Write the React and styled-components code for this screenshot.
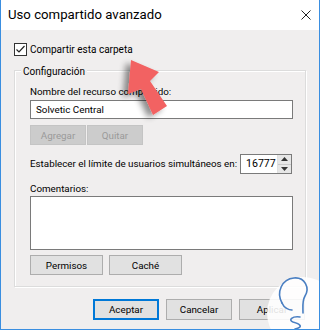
import React from "react";
import styled, { createGlobalStyle } from "styled-components";

const Global = createGlobalStyle`
  html, body { margin: 0; padding: 0; background: #fff; }
  * { box-sizing: border-box; }
`;

const Window = styled.div`
  position: relative;
  width: 320px;
  height: 330px;
  overflow: hidden;
  display: flex;
  flex-direction: column;
  background: #f0eeee;
  border: 1px solid #3a8ee0;
  border-top: none;
  font-family: Roboto, "Liberation Sans", sans-serif;
  font-size: 9.8px;
  color: #000;
`;

const TitleBar = styled.div`
  height: 30px;
  flex: none;
  background: #fff;
  display: flex;
  align-items: center;
  justify-content: space-between;
  padding: 0 8px 1px 7px;
`;

const Title = styled.span`
  font-size: 13.2px;
  line-height: 16px;
`;

const Body = styled.div`
  flex: 1;
  display: flex;
  flex-direction: column;
  padding: 13px 13px 0 13px;
`;

const CheckRow = styled.label`
  display: flex;
  align-items: center;
  gap: 3px;
  height: 13px;
  line-height: 15px;
  white-space: nowrap;
  font-size: 10px;
`;

const CheckBox = styled.span`
  width: 13px;
  height: 13px;
  border: 1px solid #333;
  background: #fff;
  display: flex;
  align-items: center;
  justify-content: center;
`;

const GroupBox = styled.div`
  margin-top: 14px;
  border: 1px solid #dcdcdc;
  box-shadow: inset 1px 1px 0 #fff, 1px 1px 0 #fff;
  padding: 0 12px 11px 15px;
  display: flex;
  flex-direction: column;
`;

const Legend = styled.span`
  align-self: flex-start;
  margin: -7px 0 0 -9px;
  padding: 0 2px;
  background: #f0eeee;
  line-height: 15px;
  font-size: 10px;
`;

const Label = styled.div`
  white-space: nowrap;
  line-height: ${(p) => p.$lh || 15}px;
  margin-top: ${(p) => p.$mt || 0}px;
  margin-bottom: ${(p) => p.$mb || 0}px;
`;

const TextBox = styled.div`
  height: ${(p) => p.$h || 19}px;
  margin-top: ${(p) => p.$mt || 0}px;
  background: #fff;
  border: 1px solid #7a7a7a;
  padding: 1px 5px;
  line-height: 15px;
`;

const ButtonRow = styled.div`
  display: flex;
  gap: ${(p) => p.$gap || 0}px;
  margin-top: ${(p) => p.$mt || 0}px;
  justify-content: ${(p) => p.$justify || "flex-start"};
  padding-right: ${(p) => p.$pr || 0}px;
`;

const Button = styled.div`
  width: ${(p) => p.$w}px;
  height: ${(p) => p.$h || 20}px;
  display: flex;
  align-items: center;
  justify-content: center;
  background: ${(p) => (p.$disabled ? "#cccccc" : "#e1e1e1")};
  border: 1px solid ${(p) => (p.$disabled ? "#c4c4c4" : p.$default ? "#0078d7" : "#adadad")};
  box-shadow: ${(p) => (p.$default ? "inset 0 0 0 1px #0078d7" : "none")};
  color: ${(p) => (p.$disabled ? "#9a9a9a" : "#000")};
  line-height: 15px;
`;

const LimitRow = styled.div`
  display: flex;
  align-items: center;
  justify-content: space-between;
  margin-top: 9px;
`;

const Spinner = styled.div`
  flex: none;
  width: 52px;
  height: 20px;
  display: flex;
  border: 1px solid #7a7a7a;
  background: #fff;
  margin-right: 1px;
`;

const SpinValue = styled.div`
  flex: 1;
  white-space: nowrap;
  padding: 1px 0 0 5px;
  line-height: 16px;
  font-size: 10.6px;
`;

const SpinButtons = styled.div`
  width: 14px;
  display: flex;
  flex-direction: column;
  border-left: 1px solid #e0e0e0;
`;

const SpinBtn = styled.div`
  flex: 1;
  background: #e6e6e6;
  display: flex;
  align-items: center;
  justify-content: center;
  border-bottom: ${(p) => (p.$top ? "1px solid #c8c8c8" : "none")};
`;

const Overlay = styled.svg`
  position: absolute;
  left: -1px;
  top: 0;
  pointer-events: none;
`;

export default function App() {
  return (
    <>
      <Global />
      <Window>
        <TitleBar>
          <Title>Uso compartido avanzado</Title>
          <svg width="10" height="10" viewBox="0 0 10 10">
            <path d="M0.5 0.5 L9.5 9.5 M9.5 0.5 L0.5 9.5" stroke="#222" strokeWidth="1" />
          </svg>
        </TitleBar>
        <Body>
          <CheckRow>
            <CheckBox>
              <svg width="11" height="11" viewBox="0 0 11 11">
                <path d="M1.5 5.5 L4 8 L9.5 2" stroke="#222" strokeWidth="1.2" fill="none" />
              </svg>
            </CheckBox>
            Compartir esta carpeta
          </CheckRow>
          <GroupBox>
            <Legend>Configuración</Legend>
            <Label $mt={5}>Nombre del recurso compartido:</Label>
            <TextBox $mt={1}>Solvetic Central</TextBox>
            <ButtonRow $mt={6} $gap={1}>
              <Button $w={56} $disabled>Agregar</Button>
              <Button $w={56} $disabled>Quitar</Button>
            </ButtonRow>
            <LimitRow>
              <Label $mb={2}>Establecer el límite de usuarios simultáneos en:</Label>
              <Spinner>
                <SpinValue>16777</SpinValue>
                <SpinButtons>
                  <SpinBtn $top>
                    <svg width="7" height="4" viewBox="0 0 7 4"><path d="M0 4 L3.5 0 L7 4 Z" fill="#333" /></svg>
                  </SpinBtn>
                  <SpinBtn>
                    <svg width="7" height="4" viewBox="0 0 7 4"><path d="M0 0 L3.5 4 L7 0 Z" fill="#333" /></svg>
                  </SpinBtn>
                </SpinButtons>
              </Spinner>
            </LimitRow>
            <Label $mt={8} $lh={14}>Comentarios:</Label>
            <TextBox $h={54} />
            <ButtonRow $mt={5} $gap={6}>
              <Button $w={73}>Permisos</Button>
              <Button $w={73}>Caché</Button>
            </ButtonRow>
          </GroupBox>
          <ButtonRow $mt={12} $gap={7} $justify="flex-end" $pr={1}>
            <Button $w={66} $h={21} $default>Aceptar</Button>
            <Button $w={66} $h={21}>Cancelar</Button>
            <Button $w={66} $h={21}>Aplicar</Button>
          </ButtonRow>
        </Body>
        <Overlay width="320" height="330" viewBox="0 0 320 330">
          <defs>
            <filter id="sh" x="-50%" y="-50%" width="200%" height="200%">
              <feGaussianBlur in="SourceAlpha" stdDeviation="3" />
              <feOffset dx="-5" dy="3" result="b" />
              <feComponentTransfer>
                <feFuncA type="linear" slope="0.45" />
              </feComponentTransfer>
              <feMerge>
                <feMergeNode />
                <feMergeNode in="SourceGraphic" />
              </feMerge>
            </filter>
          </defs>
          <polygon
            points="131,60 159,72 150,81 167,106 153,115 141,89 128,94"
            fill="#f26262"
            filter="url(#sh)"
          />
          <circle cx="303" cy="313" r="36" fill="#ffffff" fillOpacity="0.88" />
          <g fill="none" stroke="#4a7fc2" strokeWidth="1.6" strokeLinecap="round" strokeLinejoin="round">
            <path d="M282 303 C276 292 282 279 294 278 C305 277 310 288 305 296 C302 301 303 307 303 313" />
            <path d="M282 303 C284 308 289 310 292 310" />
            <path d="M300 317 C292 316 288 320 293 322 C300 324 304 327 295 329" />
          </g>
        </Overlay>
      </Window>
    </>
  );
}
